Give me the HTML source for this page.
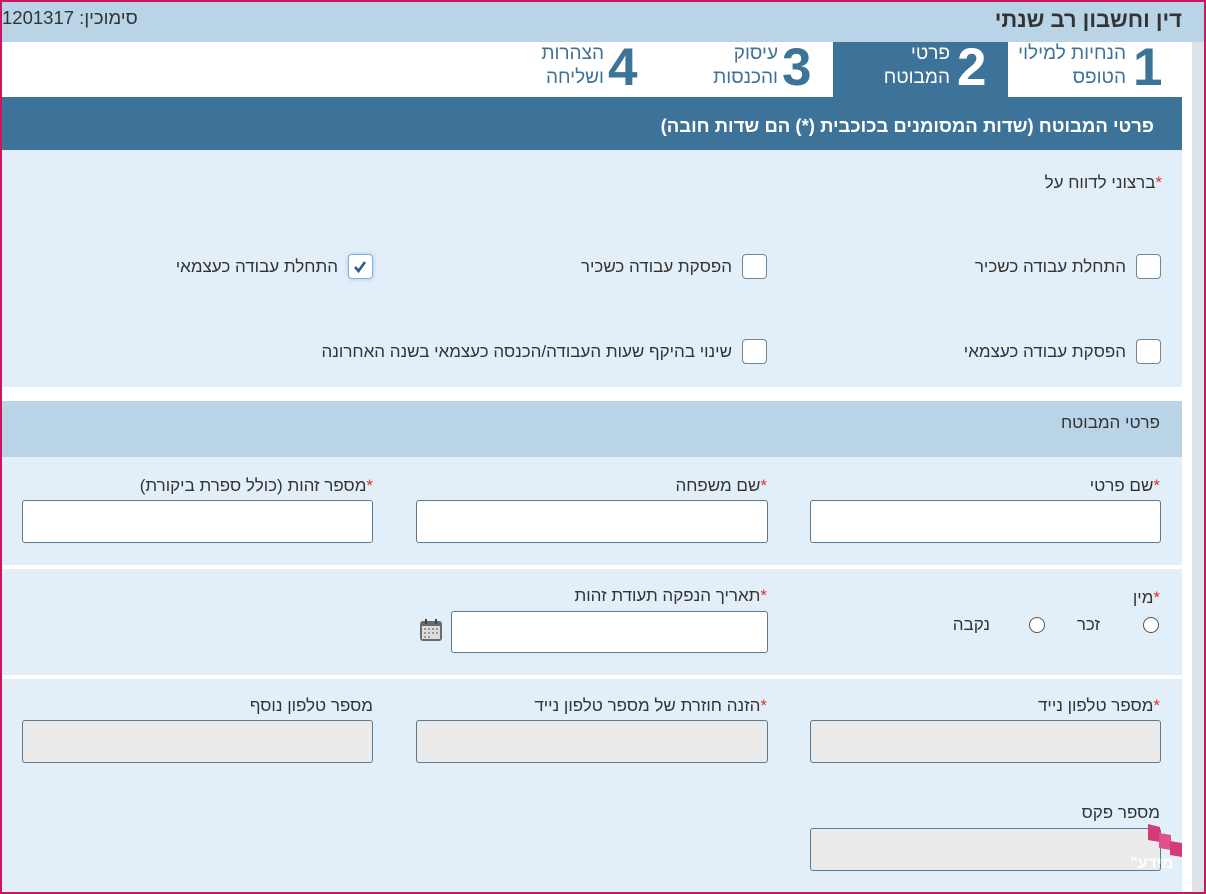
<!DOCTYPE html>
<html><head><meta charset="utf-8"><style>
*{box-sizing:border-box;margin:0;padding:0}
body{width:1206px;height:894px;overflow:hidden;font-family:"Liberation Sans","Noto Sans CJK SC",sans-serif;color:#333;background:#fff;position:relative}
.a{position:absolute}
.t{position:absolute;white-space:nowrap;direction:rtl;font-size:17px;color:#333}
.cb{position:absolute;width:25px;height:25px;border:1px solid #6e8799;border-radius:4px;background:#fff}
.in{position:absolute;height:43px;border:1px solid #5d7a8f;border-radius:3px;background:#fff}
.g{background:#ebebeb}
.st{color:#d33}
.rd{position:absolute;width:16px;height:16px;border:1px solid #555;border-radius:50%;background:#fff}
.n{position:absolute;font-size:53px;font-weight:bold;line-height:52px}
.tt{position:absolute;white-space:nowrap;direction:rtl;font-size:19px;line-height:24px;text-align:right}
</style></head><body>
<div class="a" style="left:0;top:0;width:1206px;height:894px;border:2px solid #c8175d;z-index:10;pointer-events:none"></div>
<div class="a" style="left:2px;top:2px;width:1202px;height:40px;background:#b8d4e6"></div>
<div class="t" style="right:24px;top:7px;font-size:22px;font-weight:bold">דין וחשבון רב שנתי</div>
<div class="t" style="left:2px;top:7px;direction:ltr;font-size:18.5px">1201317 :סימוכין</div>
<div class="a" style="left:1192px;top:42px;width:12px;height:850px;background:#dde3e6"></div>
<!-- tabs -->
<div class="a" style="left:833px;top:42px;width:175px;height:56px;background:#3d7399"></div>
<div class="n" style="left:1133px;top:42px;color:#3d7399">1</div>
<div class="tt" style="right:80px;top:42px;color:#3d7399">הנחיות למילוי<br>הטופס</div>
<div class="n" style="left:957px;top:42px;color:#fff">2</div>
<div class="tt" style="right:256px;top:42px;color:#fff">פרטי<br>המבוטח</div>
<div class="n" style="left:782px;top:42px;color:#3d7399">3</div>
<div class="tt" style="right:428px;top:42px;color:#3d7399">עיסוק<br>והכנסות</div>
<div class="n" style="left:608px;top:42px;color:#3d7399">4</div>
<div class="tt" style="right:602px;top:42px;color:#3d7399">הצהרות<br>ושליחה</div>
<!-- blue bar -->
<div class="a" style="left:2px;top:97px;width:1180px;height:53px;background:#3d7399"></div>
<div class="t" style="right:52px;top:115px;color:#fff;font-size:18.5px;font-weight:bold">פרטי המבוטח (שדות המסומנים בכוכבית (*) הם שדות חובה)</div>
<!-- section 1 -->
<div class="a" style="left:2px;top:150px;width:1180px;height:237px;background:#e3eff8"></div>
<div class="t" style="right:44px;top:173px"><span class="st">*</span>ברצוני לדווח על</div>
<div class="cb" style="left:1136px;top:254px"></div><div class="t" style="right:80px;top:257px">התחלת עבודה כשכיר</div>
<div class="cb" style="left:742px;top:254px"></div><div class="t" style="right:474px;top:257px">הפסקת עבודה כשכיר</div>
<div class="cb" style="left:348px;top:254px;border-color:#7fb2e5;box-shadow:0 0 4px #9cc3ec"><svg width="23" height="23" viewBox="0 0 23 23"><path d="M6 12 L9.5 16 L16 7" stroke="#2a5b85" stroke-width="2.6" fill="none"/></svg></div><div class="t" style="right:868px;top:257px">התחלת עבודה כעצמאי</div>
<div class="cb" style="left:1136px;top:339px"></div><div class="t" style="right:80px;top:342px">הפסקת עבודה כעצמאי</div>
<div class="cb" style="left:742px;top:339px"></div><div class="t" style="right:474px;top:342px">שינוי בהיקף שעות העבודה/הכנסה כעצמאי בשנה האחרונה</div>
<!-- section header -->
<div class="a" style="left:2px;top:401px;width:1180px;height:56px;background:#b8d4e6"></div>
<div class="t" style="right:46px;top:413px">פרטי המבוטח</div>
<!-- row 1 -->
<div class="a" style="left:2px;top:457px;width:1180px;height:108px;background:#e3eff8"></div>
<div class="t" style="right:46px;top:476px"><span class="st">*</span>שם פרטי</div>
<div class="t" style="right:439px;top:476px"><span class="st">*</span>שם משפחה</div>
<div class="t" style="right:833px;top:476px"><span class="st">*</span>מספר זהות (כולל ספרת ביקורת)</div>
<div class="in" style="left:810px;top:500px;width:351px"></div>
<div class="in" style="left:416px;top:500px;width:352px"></div>
<div class="in" style="left:22px;top:500px;width:351px"></div>
<!-- row 2 -->
<div class="a" style="left:2px;top:569px;width:1180px;height:106px;background:#e3eff8"></div>
<div class="t" style="right:46px;top:588px"><span class="st">*</span>מין</div>
<div class="rd" style="left:1143px;top:617px"></div><div class="t" style="right:106px;top:615px">זכר</div>
<div class="rd" style="left:1029px;top:617px"></div><div class="t" style="right:216px;top:615px">נקבה</div>
<div class="t" style="right:439px;top:586px"><span class="st">*</span>תאריך הנפקה תעודת זהות</div>
<div class="in" style="left:451px;top:611px;width:317px;height:42px"></div>
<svg class="a" style="left:419px;top:618px" width="24" height="24" viewBox="0 0 24 24"><rect x="1" y="3" width="22" height="20" rx="3" fill="#6b6b6b"/><rect x="3" y="8" width="18" height="13" fill="#ddd"/><g fill="#999"><rect x="5" y="10" width="2" height="2"/><rect x="9" y="10" width="2" height="2"/><rect x="13" y="10" width="2" height="2"/><rect x="17" y="10" width="2" height="2"/><rect x="5" y="14" width="2" height="2"/><rect x="9" y="14" width="2" height="2"/><rect x="13" y="14" width="2" height="2"/><rect x="17" y="14" width="2" height="2"/><rect x="5" y="18" width="2" height="2"/><rect x="9" y="18" width="2" height="2"/></g><rect x="6" y="1" width="2" height="5" fill="#444"/><rect x="16" y="1" width="2" height="5" fill="#444"/></svg>
<!-- row 3 -->
<div class="a" style="left:2px;top:679px;width:1180px;height:215px;background:#e3eff8"></div>
<div class="t" style="right:46px;top:696px"><span class="st">*</span>מספר טלפון נייד</div>
<div class="t" style="right:439px;top:696px"><span class="st">*</span>הזנה חוזרת של מספר טלפון נייד</div>
<div class="t" style="right:833px;top:696px">מספר טלפון נוסף</div>
<div class="in g" style="left:810px;top:720px;width:351px"></div>
<div class="in g" style="left:416px;top:720px;width:352px"></div>
<div class="in g" style="left:22px;top:720px;width:351px"></div>
<div class="t" style="right:46px;top:803px">מספר פקס</div>
<div class="in g" style="left:810px;top:828px;width:351px"></div>
<!-- logo -->
<svg class="a" style="left:1147px;top:823px;z-index:11" width="42" height="34" viewBox="0 0 42 34"><path d="M1 1 L13 4 L13 19 L1 17Z" fill="#d23a78"/><path d="M12 10 L24 12 L24 27 L12 25Z" fill="#e0508a"/><path d="M23 18 L35 20 L35 34 L23 32Z" fill="#d23a78"/></svg>
<div class="t" style="left:1130px;top:855px;color:#fff;font-weight:bold;font-size:16px">מידע"</div>
</body></html>
